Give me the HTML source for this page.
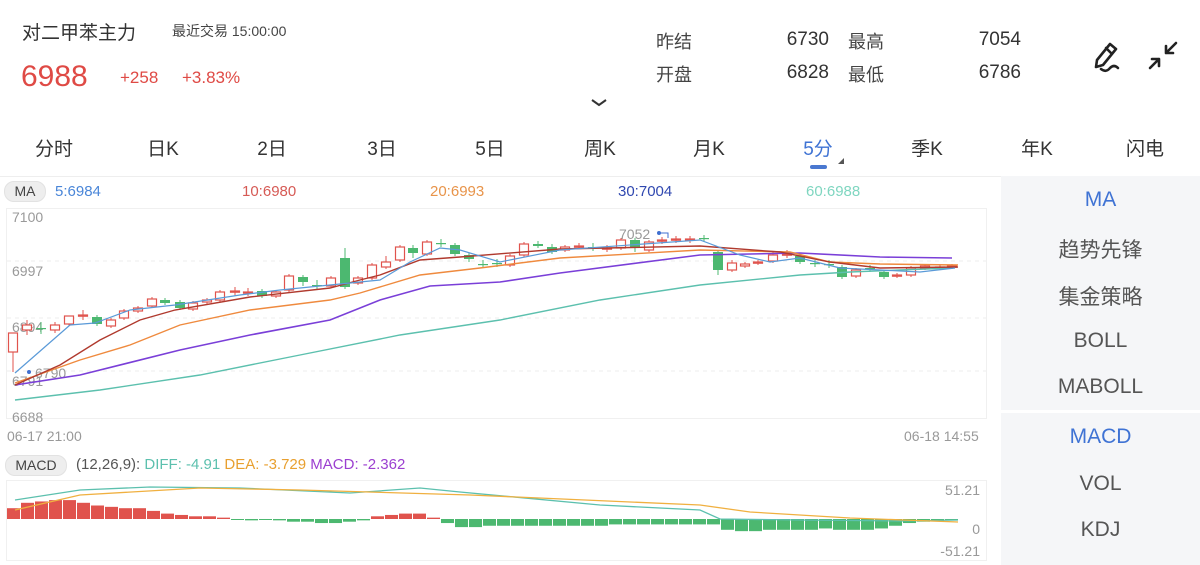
<!DOCTYPE html>
<html><head><meta charset="utf-8">
<style>
*{margin:0;padding:0;box-sizing:border-box}
body{width:1200px;height:565px;overflow:hidden;background:#fff;font-family:"Liberation Sans","Noto Sans CJK SC",sans-serif;position:relative;color:#333}
.a{position:absolute;white-space:nowrap}
.tab{position:absolute;top:134px;font-size:19px;color:#333;transform:translateX(-50%)}
.rp{position:absolute;left:1001px;width:199px;background:#f5f6f8}
.rp div{position:absolute;width:100%;text-align:center;font-size:21px;color:#555}
</style></head><body>
<div class="a" style="left:22px;top:18px;font-size:19px;color:#333">对二甲苯主力</div>
<div class="a" style="left:172px;top:21px;font-size:14px;color:#444">最近交易 15:00:00</div>
<div class="a" style="left:21px;top:60px;font-size:30px;color:#df4a45">6988</div>
<div class="a" style="left:120px;top:68px;font-size:17px;color:#df4a45">+258</div>
<div class="a" style="left:182px;top:68px;font-size:17px;color:#df4a45">+3.83%</div>
<div class="a" style="left:656px;top:28px;font-size:18px;color:#444">昨结</div>
<div class="a" style="left:656px;top:61px;font-size:18px;color:#444">开盘</div>
<div class="a" style="left:760px;width:69px;text-align:right;top:29px;font-size:19px;color:#333">6730</div>
<div class="a" style="left:760px;width:69px;text-align:right;top:62px;font-size:19px;color:#333">6828</div>
<div class="a" style="left:848px;top:28px;font-size:18px;color:#444">最高</div>
<div class="a" style="left:848px;top:61px;font-size:18px;color:#444">最低</div>
<div class="a" style="left:950px;width:71px;text-align:right;top:29px;font-size:19px;color:#333">7054</div>
<div class="a" style="left:950px;width:71px;text-align:right;top:62px;font-size:19px;color:#333">6786</div>
<svg class="a" style="left:0;top:0" width="1200" height="180">
<path d="M592 100 L599 105 L606 100" stroke="#333" stroke-width="2" fill="none"/>
<g stroke="#222" stroke-width="2.6" fill="none" stroke-linecap="round" stroke-linejoin="round">
<path d="M1110 44 L1097 60 L1096 67 L1103 65 L1116 49 Z M1106 48 L1112 54"/>
<path d="M1101 69 Q1106 73 1110 68 Q1114 64 1118 68"/>
<path d="M1176 43 L1166 53 M1166 46 L1166 53 L1173 53"/>
<path d="M1150 68 L1159 59 M1152 59 L1159 59 L1159 66"/>
</g>
<rect x="810" y="165" width="17" height="4" rx="2" fill="#4a78d0"/>
<path d="M838 164 L844 158 L844 164 Z" fill="#555"/>
</svg>
<div class="tab" style="left:54px">分时</div>
<div class="tab" style="left:163px">日K</div>
<div class="tab" style="left:272px">2日</div>
<div class="tab" style="left:382px">3日</div>
<div class="tab" style="left:490px">5日</div>
<div class="tab" style="left:600px">周K</div>
<div class="tab" style="left:709px">月K</div>
<div class="tab" style="left:818px;color:#3f73d4">5分</div>
<div class="tab" style="left:927px">季K</div>
<div class="tab" style="left:1037px">年K</div>
<div class="tab" style="left:1145px">闪电</div>
<div style="position:absolute;left:0;top:176px;width:1200px;height:1px;background:#eee"></div>

<div class="rp" style="top:176px;height:234px">
<div style="top:12px;color:#3f73d4">MA</div>
<div style="top:58px">趋势先锋</div>
<div style="top:105px">集金策略</div>
<div style="top:153px">BOLL</div>
<div style="top:199px">MABOLL</div>
</div>
<div class="rp" style="top:413px;height:152px">
<div style="top:12px;color:#3f73d4">MACD</div>
<div style="top:59px">VOL</div>
<div style="top:105px">KDJ</div>
</div>

<div class="a" style="left:4px;top:181px;width:42px;height:21px;border-radius:10px;background:#eee;border:1px solid #e2e2e2;font-size:14px;color:#444;text-align:center;line-height:19px">MA</div>
<div class="a" style="left:55px;top:183px;font-size:15px;color:#4a86d8">5:6984</div>
<div class="a" style="left:242px;top:183px;font-size:15px;color:#d65a55">10:6980</div>
<div class="a" style="left:430px;top:183px;font-size:15px;color:#e8944a">20:6993</div>
<div class="a" style="left:618px;top:183px;font-size:15px;color:#3048b0">30:7004</div>
<div class="a" style="left:806px;top:183px;font-size:15px;color:#7fd6c0">60:6988</div>

<div class="a" style="left:5px;top:455px;width:62px;height:21px;border-radius:10px;background:#eee;border:1px solid #e2e2e2;font-size:14px;color:#444;text-align:center;line-height:19px">MACD</div>
<div class="a" style="left:76px;top:456px;font-size:15px;color:#555">(12,26,9): <span style="color:#5cc0ae">DIFF: -4.91</span> <span style="color:#e8a030">DEA: -3.729</span> <span style="color:#9b3fd0">MACD: -2.362</span></div>

<svg id="ch" class="a" style="left:0;top:0" width="1000" height="565">
<rect x="6.5" y="208.5" width="980" height="210" fill="none" stroke="#f0f0f0"/>
<g stroke="#ececec" stroke-dasharray="4 4"><line x1="7" y1="261" x2="986" y2="261"/><line x1="7" y1="318" x2="986" y2="318"/><line x1="7" y1="371" x2="986" y2="371"/></g>
<rect x="6.5" y="480.5" width="980" height="80" fill="none" stroke="#f0f0f0"/>
<g font-size="14" fill="#999" font-family="Liberation Sans,sans-serif">
<text x="12" y="222">7100</text><text x="12" y="276">6997</text><text x="12" y="332">6894</text><text x="12" y="386">6791</text><text x="12" y="422">6688</text>
<text x="35" y="378">6790</text><text x="619" y="239">7052</text>
<text x="7" y="441">06-17 21:00</text><text x="904" y="441">06-18 14:55</text>
<text x="980" y="495" text-anchor="end">51.21</text><text x="980" y="534" text-anchor="end">0</text><text x="980" y="556" text-anchor="end">-51.21</text>
</g>
<path d="M658 233 L668 233 L668 238" stroke="#3f6fd0" fill="none"/><circle cx="659" cy="233" r="2" fill="#3f6fd0"/>
<circle cx="29" cy="372" r="2" fill="#3f6fd0"/>
<g id="cd"></g>
<g fill="none" stroke-width="1.4">
<polyline stroke="#5cc0ae" points="15,400 100,390 200,375 300,355 400,335 500,320 600,300 700,285 800,275 850,272 900,270 952,268"/>
<polyline stroke="#7a3fd8" stroke-width="1.6" points="15,385 80,375 180,350 250,335 330,320 380,300 430,286 500,282 560,273 700,255 800,253 880,257 952,258"/>
<polyline stroke="#ef8a3e" points="15,383 80,360 130,345 180,325 250,310 330,300 360,293 420,275 480,268 560,258 700,250 790,252 830,262 880,264 958,265"/>
<polyline stroke="#b03a2e" points="15,385 60,365 100,340 140,320 175,310 250,297 330,288 360,280 380,275 420,260 460,257 560,249 700,246 780,252 830,262 880,268 958,267"/>
<polyline stroke="#5a9ad8" stroke-width="1.2" points="15,373 70,325 95,323 130,310 175,305 240,295 280,290 330,285 380,280 410,262 440,248 460,250 500,262 560,250 700,240 740,255 770,262 800,258 840,268 880,270 920,272 955,268"/>
</g>
<g id="mb"></g>
<g fill="none" stroke-width="1.3">
<polyline stroke="#5cc0ae" points="15,500 80,490 150,487 240,488 350,493 420,488 460,492 600,505 700,510 720,519 800,520 900,521 958,520"/>
<polyline stroke="#f0b040" points="15,510 80,495 200,488 300,490 470,495 700,505 750,512 850,518 958,522"/>
</g>
</svg>
<script>
var R="#e0534d",G="#4cb870";
var c=[[13,333,352,333,372,R],[27,325,330,320,335,R],[41,328,328,322,334,G],[55,325,330,322,333,R],[69,316,324,316,326,R],[83,315,315,310,320,R],[97,317,324,315,326,G],[111,320,326,318,328,R],[124,311,318,309,320,R],[138,308,311,306,313,R],[152,299,306,297,308,R],[165,300,303,298,305,G],[180,302,308,300,310,G],[193,303,309,301,311,R],[207,300,302,298,304,R],[220,292,300,290,302,R],[235,291,291,287,296,R],[248,292,292,288,296,R],[262,291,296,289,298,G],[276,292,296,290,298,R],[289,276,290,274,292,R],[303,277,282,275,286,G],[317,285,285,280,290,G],[331,278,286,276,288,R],[345,258,287,248,289,G],[358,278,283,276,285,R],[372,265,278,263,280,R],[386,262,267,256,269,R],[400,247,260,245,262,R],[413,248,253,245,258,G],[427,242,254,240,256,R],[441,243,243,239,247,G],[455,245,254,243,256,G],[469,255,259,253,262,G],[483,264,264,260,268,G],[497,263,263,259,267,G],[510,256,265,254,267,R],[524,244,255,242,257,R],[538,244,246,241,248,G],[552,247,252,244,254,G],[565,247,250,245,252,R],[579,246,246,243,249,R],[593,247,247,243,251,G],[607,248,248,245,252,R],[621,240,248,238,250,R],[635,240,248,238,252,G],[649,242,250,240,252,R],[662,240,240,237,244,R],[676,239,239,236,243,R],[690,239,239,236,243,R],[704,238,238,235,242,G],[718,252,270,250,275,G],[732,263,270,260,272,R],[745,264,266,262,268,R],[758,262,263,260,265,R],[773,255,261,252,263,R],[787,254,254,250,258,R],[800,256,262,254,264,G],[815,263,263,260,267,G],[829,264,264,260,268,G],[842,267,277,265,279,G],[856,270,276,268,278,R],[870,268,268,265,272,G],[884,272,277,270,279,G],[897,275,276,273,278,R],[911,268,275,266,277,R],[925,266,268,264,270,R],[940,267,268,265,270,R],[952,266,267,264,269,R]];
var s="";c.forEach(function(k){var h=Math.max(k[2]-k[1],1.2);s+='<line x1="'+k[0]+'" x2="'+k[0]+'" y1="'+k[3]+'" y2="'+k[4]+'" stroke="'+k[5]+'"/>';
if(k[5]==R)s+='<rect x="'+(k[0]-4.5)+'" y="'+k[1]+'" width="9" height="'+h+'" fill="#fff" stroke="'+R+'" stroke-width="1.2"/>';else s+='<rect x="'+(k[0]-5)+'" y="'+k[1]+'" width="10" height="'+h+'" fill="'+G+'"/>';});
document.getElementById("cd").innerHTML=s;
var m=[8,12,13,14,14,12,10,9,8,8,6,4,3,2,2,1,-0.5,-1,-0.5,-1,-2,-2,-3,-3,-2,-1,2,3,4,4,1,-3,-6,-6,-5,-5,-5,-5,-5,-5,-5,-5,-5,-4,-4,-4,-4,-4,-4,-4,-4,-8,-9,-9,-8,-8,-8,-8,-7,-8,-8,-8,-7,-5,-3,-2,-1.5,-1];
s="";m.forEach(function(v,i){var x=7+i*14,h=Math.abs(v)*1.35;s+='<rect x="'+x+'" y="'+(v>0?519-h:519)+'" width="13" height="'+Math.max(h,1)+'" fill="'+(v>0?R:G)+'"/>';});
document.getElementById("mb").innerHTML=s;
</script>
</body></html>
